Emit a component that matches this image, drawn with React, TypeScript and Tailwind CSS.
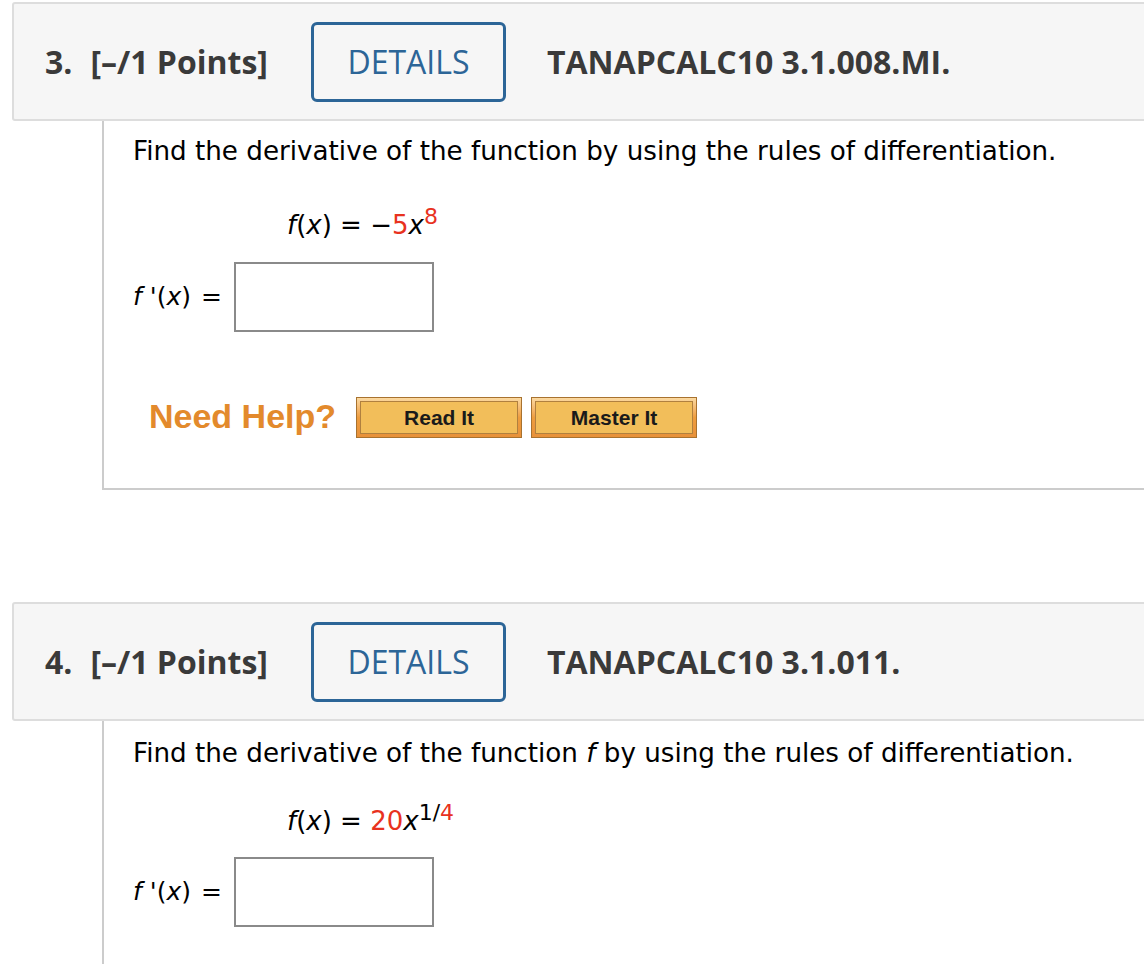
import React from "react";

const RED = "text-[#e8321e]";

function Header({ num, code }: { num: string; code: string }) {
  return (
    <div className="flex h-[119px] w-[1180px] items-center rounded-[3px] border-2 border-[#dddddd] bg-[#f6f6f6] pl-[31px] font-['Open_Sans',sans-serif] text-[#3a3a3a]">
      <span className="text-[32px] font-bold">{num}.</span>
      <span className="ml-[18px] text-[32px] font-bold">[–/1 Points]</span>
      <div className="ml-[43px] flex h-[80px] w-[195px] items-center justify-center rounded-[6px] border-[3px] border-[#2c6597] text-[32px] text-[#2c6597]">
        DETAILS
      </div>
      <span className="ml-[41px] text-[32px] font-bold">{code}</span>
    </div>
  );
}

function AnswerRow() {
  return (
    <div className="flex items-center">
      <span className="text-[25px]">
        <i>f</i> '(<i>x</i>)
      </span>
      <span className="ml-[10px] text-[25px]">=</span>
      <div className="ml-[12px] h-[70px] w-[200px] border-2 border-[#8a8a8a] bg-white" />
    </div>
  );
}

function HelpButton({ label }: { label: string }) {
  return (
    <div className="flex h-[41px] w-[166px] items-center justify-center border border-[#a8722f] bg-gradient-to-b from-[#fbd9a0] via-[#ee9d3f] to-[#e8913a] p-[3px]">
      <div className="flex h-full w-full items-center justify-center border border-[#b0803f] bg-[#f2be5a] font-['Liberation_Sans',Arial,sans-serif] text-[21px] font-bold text-[#1a1a1a]">
        {label}
      </div>
    </div>
  );
}

export default function App() {
  return (
    <div className="h-[964px] w-[1144px] overflow-hidden bg-white pl-[12px] pt-[2px] font-['DejaVu_Sans',Verdana,sans-serif] text-black">
      <Header num="3" code="TANAPCALC10 3.1.008.MI." />
      <div className="ml-[90px] h-[369px] w-[1100px] border-b-2 border-l-2 border-[#cccccc] pl-[29px] pt-[14px]">
        <p className="text-[26.2px] leading-[32px]">
          Find the derivative of the function by using the rules of differentiation.
        </p>
        <div className="ml-[154px] mt-[42px] h-[32px] text-[26px] leading-[32px]">
          <i>f</i>(<i>x</i>) = −<span className={RED}>5</span>
          <i>x</i>
          <sup className={`${RED} relative -top-[10px] text-[22px] leading-none`}>8</sup>
        </div>
        <div className="mt-[21px]">
          <AnswerRow />
        </div>
        <div className="ml-[16px] mt-[65px] flex items-center">
          <span className="relative -top-[2px] font-['Liberation_Sans',Arial,sans-serif] text-[34px] font-bold leading-none text-[#e38a2c]">
            Need Help?
          </span>
          <div className="ml-[20px] flex gap-[9px]">
            <HelpButton label="Read It" />
            <HelpButton label="Master It" />
          </div>
        </div>
      </div>
      <div className="h-[112px]" />
      <Header num="4" code="TANAPCALC10 3.1.011." />
      <div className="ml-[90px] h-[300px] w-[1100px] border-l-2 border-[#cccccc] pl-[29px] pt-[16px]">
        <p className="text-[26.2px] leading-[32px]">
          Find the derivative of the function <i>f</i> by using the rules of differentiation.
        </p>
        <div className="ml-[154px] mt-[36px] h-[32px] text-[26px] leading-[32px]">
          <i>f</i>(<i>x</i>) = <span className={RED}>20</span>
          <i>x</i>
          <sup className="relative -top-[10px] text-[22px] leading-none">
            1/<span className={RED}>4</span>
          </sup>
        </div>
        <div className="mt-[20px]">
          <AnswerRow />
        </div>
      </div>
    </div>
  );
}
